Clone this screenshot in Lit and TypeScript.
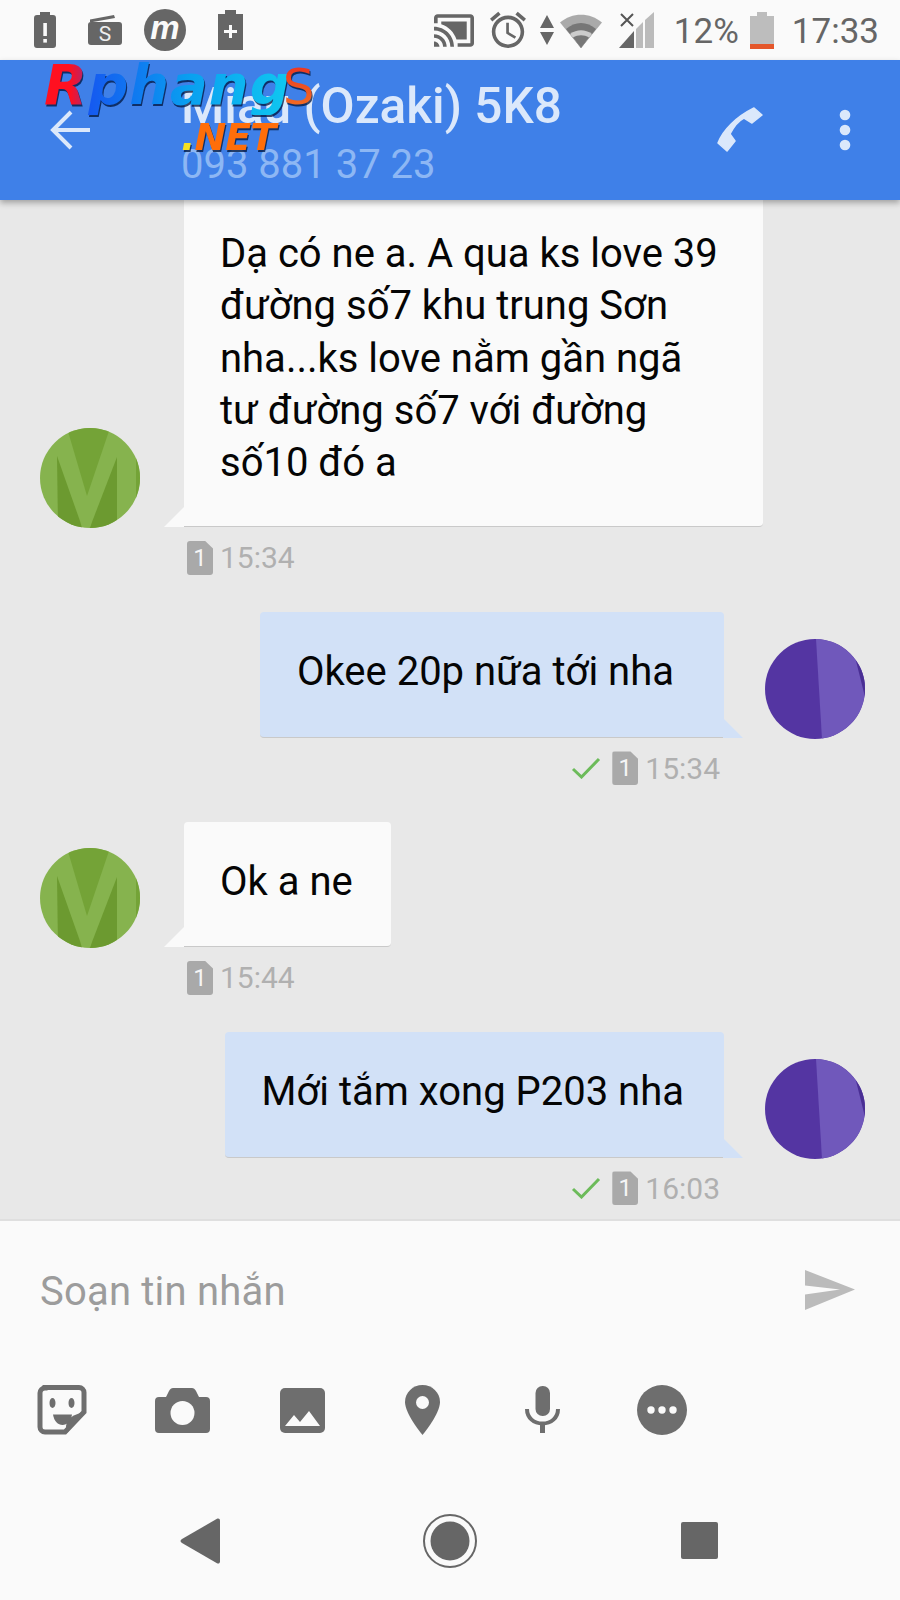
import { LitElement, html, css } from "lit";
import { customElement } from "lit/decorators.js";

const greenAvatar = html`<svg class="avatar" viewBox="0 0 100 100">
  <defs><clipPath id="cg"><circle cx="50" cy="50" r="50"/></clipPath></defs>
  <g clip-path="url(#cg)">
    <rect width="100" height="100" fill="#86b34e"/>
    <polygon points="27,0 70,0 47,68" fill="#74a337"/>
    <polygon points="17,28 40,93 42,100 18,100" fill="#6c9a30"/>
    <polygon points="77,29 77,100 50,100 52,94" fill="#6c9a30"/>
    <rect x="96" y="30" width="4" height="40" fill="#74a337"/>
  </g></svg>`;

const purpleAvatar = html`<svg class="avatar" viewBox="0 0 100 100">
  <defs><clipPath id="cp"><circle cx="50" cy="50" r="50"/></clipPath></defs>
  <g clip-path="url(#cp)">
    <rect width="100" height="100" fill="#5435a2"/>
    <polygon points="51,0 100,0 100,100 57,100" fill="#7058bb"/>
    <polygon points="90,18 100,30 100,58" fill="#4a2f94"/>
  </g></svg>`;

const docIcon = html`<span class="doc"><span>1</span></span>`;
const check = html`<svg class="check" viewBox="0 0 30 22"><path d="M2 12l8.500 8L28 2" fill="none" stroke="#6cbb5a" stroke-width="3"/></svg>`;

@customElement("app-root")
export class AppRoot extends LitElement {
  static styles = css`
    :host { display: block; width: 900px; height: 1600px; position: relative; overflow: hidden; font-family: Roboto, "Noto Sans", sans-serif; background: #fafafa; }
    .page { display: flex; flex-direction: column; height: 1600px; }
    .status { flex: none; height: 60px; display: flex; align-items: center; padding: 0 21px 0 34px; background: #fafafa; color: #666; box-sizing: border-box; }
    .status svg { display: block; flex: none; }
    .st { font-size: 35px; line-height: 40px; padding-top: 3px; }
    .m1 { margin-left: 32px; } .m2 { margin-left: 22px; } .m3 { margin-left: 32px; }
    .cast { margin-left: auto; } .m5 { margin-left: 16px; } .m6 { margin-left: 14px; } .m7 { margin-left: 6px; }
    .m8 { margin-left: 17px; } .m9 { margin-left: 20px; } .m10 { margin-left: 11px; } .m11 { margin-left: 18px; }

    .bar { flex: none; height: 140px; background: #3f80e8; display: flex; align-items: center; box-shadow: 0 3px 6px rgba(0,0,0,.3); position: relative; z-index: 2; box-sizing: border-box; padding-left: 50px; }
    .back { width: 42px; height: 42px; flex: none; }
    .names { margin-left: 89px; padding-top: 7px; display: flex; flex-direction: column; }
    .title { font-size: 49.5px; line-height: 56px; font-weight: 500; color: #dbe8fb; white-space: nowrap; }
    .phone { font-size: 40px; line-height: 48px; margin-top: 7px; color: #8db7f4; white-space: nowrap; }
    .call { width: 46px; height: 46px; margin-left: auto; flex: none; }
    .dots { width: 14px; height: 42px; margin: 0 48px 0 75px; flex: none; }

    .chat { flex: 1; min-height: 0; background: #e8e8e8; overflow: hidden; display: flex; flex-direction: column; }
    .group { margin-bottom: 37px; flex: none; }
    .row { display: flex; align-items: flex-end; }
    .row.in { padding-left: 40px; }
    .row.out { justify-content: flex-end; padding-right: 35px; }
    .avatar { width: 100px; height: 100px; flex: none; display: block; margin-bottom: -1px; }
    .bubble { position: relative; font-size: 40px; line-height: 52.5px; color: #050505; box-sizing: border-box; border-radius: 4px; border-bottom: 1px solid #c9c9c9; padding: 34px 38px 38px 36px; white-space: nowrap; }
    .in .bubble { background: #fafafa; margin-left: 44px; border-bottom-left-radius: 0; }
    .out .bubble { background: #d2e1f7; margin-right: 41px; border-bottom-right-radius: 0; padding-left: 37px; padding-right: 40px; }
    .in .bubble.first { padding-top: 28px; padding-bottom: 37px; width: 579px; white-space: normal; border-top-left-radius: 0; border-top-right-radius: 0; line-height: 52.3px; }
    .out .bubble.wide { padding-right: 50px; }
    .tail { position: absolute; bottom: -1px; width: 20px; height: 20px; }
    .in .tail { left: -20px; }
    .out .tail { right: -19px; }

    .meta { display: flex; align-items: center; height: 35px; font-size: 30px; color: #b0b0b0; }
    .meta.in { margin-top: 13px; padding-left: 187px; }
    .meta.out { margin-top: 13px; margin-bottom: -1px; justify-content: flex-end; padding-right: 180px; }
    .doc { position: relative; width: 26px; height: 34px; background: #a9a9a9; border-radius: 3px; clip-path: polygon(0 0, 70% 0, 100% 22%, 100% 100%, 0 100%); color: #f5f5f5; font-size: 24px; display: flex; align-items: center; justify-content: center; margin-right: 7px; flex: none; }
    .check { width: 30px; height: 22px; margin-right: 11px; }

    .composer { flex: none; height: 381px; background: #fafafa; border-top: 2px solid #dfdfdf; box-sizing: border-box; display: flex; flex-direction: column; }
    .input { flex: none; height: 138px; display: flex; align-items: center; padding: 0 45px 0 40px; }
    .ph { font-size: 40px; color: #9c9c9c; letter-spacing: 0.2px; padding-top: 2px; }
    .send { width: 50px; height: 40px; margin-left: auto; }
    .tools { flex: none; height: 102px; display: flex; align-items: center; padding-left: 2px; }
    .tool { width: 120px; display: flex; justify-content: center; align-items: center; }
    .nav { flex: 1; display: flex; align-items: center; padding-top: 20px; padding-left: 180px; }
    .tri { width: 40px; height: 46px; }
    .home { width: 54px; height: 54px; margin-left: 203px; }
    .sq { width: 37px; height: 37px; margin-left: 204px; background: #666; border-radius: 2px; }

    .logo { position: absolute; left: 44px; top: 55px; z-index: 3; font-family: "DejaVu Sans", sans-serif; font-weight: 700; font-style: italic; pointer-events: none; filter: drop-shadow(1px 2px 0 rgba(0,20,60,.75)); }
    .l1 { display: flex; align-items: baseline; white-space: nowrap; line-height: 60px; font-size: 56px; letter-spacing: 1px; }
    .r { background: linear-gradient(90deg,#ff1020 60%,#a02a80); -webkit-background-clip: text; background-clip: text; color: transparent; }
    .ph2 { background: linear-gradient(90deg,#1558f0,#09a0f0 50%,#10c8f0); -webkit-background-clip: text; background-clip: text; color: transparent; }
    .s { font-size: 50px; font-weight: 400; font-style: normal; margin-left: -8px; background: linear-gradient(180deg,#ea2a20,#f47a24); -webkit-background-clip: text; background-clip: text; color: transparent; }
    .l2 { position: absolute; left: 137px; top: 62px; font-size: 38px; line-height: 40px; color: #ff6e0a; white-space: nowrap; letter-spacing: -1px; }
    .dot { color: #f5e020; }
  `;

  render() {
    return html`<div class="page">
      <div class="status">
        <svg width="22" height="36" viewBox="0 0 22 36"><path d="M6 0h10v3h3a3 3 0 0 1 3 3v27a3 3 0 0 1-3 3H3a3 3 0 0 1-3-3V6a3 3 0 0 1 3-3h3z" fill="#666"/><rect x="9.300" y="11" width="3.600" height="13" fill="#fafafa"/><rect x="9.300" y="27" width="3.600" height="3.600" fill="#fafafa"/></svg>
        <svg class="m1" width="34" height="30" viewBox="0 0 34 30"><path d="M2 4.500L26 0l1 3-25 4.500z" fill="#666"/><rect y="7" width="34" height="23" rx="3" fill="#666"/><text x="17" y="26" font-family="Roboto" font-size="21" fill="#eee" text-anchor="middle">S</text></svg>
        <svg class="m2" width="42" height="42" viewBox="0 0 42 42"><circle cx="21" cy="21" r="21" fill="#666"/><text x="21" y="30" font-family="Liberation Sans" font-size="33" font-weight="700" font-style="italic" fill="#fafafa" text-anchor="middle">m</text></svg>
        <svg class="m3" width="25" height="40" viewBox="0 0 25 40"><path d="M7 0h11v4h7v36H0V4h7z" fill="#666"/><path d="M11 15h3v5h5v3h-5v5h-3v-5H6v-3h5z" fill="#fafafa"/></svg>

        <svg class="cast" width="40" height="33" viewBox="1 3 22 18"><path fill="#666" d="M21 3H3c-1.100 0-2 .9-2 2v3h2V5h18v14h-7v2h7c1.100 0 2-.9 2-2V5c0-1.100-.9-2-2-2zM1 18v3h3c0-1.660-1.340-3-3-3zm0-4v2c2.760 0 5 2.240 5 5h2c0-3.870-3.130-7-7-7zm0-4v2c4.970 0 9 4.030 9 9h2c0-6.080-4.930-11-11-11z"/><path fill="#666" d="M19 7H5v1.630c3.960 1.280 7.090 4.410 8.370 8.370H19V7z"/></svg>
        <svg class="m5" width="36" height="38" viewBox="2 1.800 20 20.400"><path fill="#666" d="M22 5.720l-4.600-3.860-1.290 1.530 4.600 3.860L22 5.720zM7.880 3.390L6.600 1.860 2 5.710l1.290 1.530 4.590-3.850zM12.500 8H11v6l4.750 2.850.75-1.230-4-2.370V8zM12 4c-4.970 0-9 4.030-9 9s4.030 9 9 9c4.970 0 9-4.030 9-9s-4.030-9-9-9zm0 16c-3.870 0-7-3.130-7-7s3.130-7 7-7 7 3.130 7 7-3.130 7-7 7z"/></svg>
        <svg class="m6" width="14" height="30" viewBox="0 0 14 30"><path d="M7 0l7 13H0zM0 17h14L7 30z" fill="#666"/></svg>
        <svg class="m7" width="42" height="35" viewBox="0 0 42 35"><path d="M0 9.500C12-1 30-1 42 9.500L21 35z" fill="#aaa"/><path d="M6 16C15 8 27 8 36 16L21 35z" fill="#777"/><path d="M10 21c7-5 15-5 22 0L21 35z" fill="#ccc"/><path d="M13 24.500c5-3 11-3 16 0L21 35z" fill="#777"/></svg>
        <svg class="m8" width="35" height="36" viewBox="0 0 35 36"><path d="M35 0v36H26V8z" fill="#bbb"/><path d="M24 10v26h-7V17z" fill="#bbb"/><path d="M15 19v17H0z" fill="#666"/><path d="M2 2l12 12M14 2L2 14" stroke="#555" stroke-width="2" fill="none"/></svg>
        <span class="st m9">12%</span>
        <svg class="m10" width="24" height="37" viewBox="0 0 24 37"><path d="M7 0h10v4h7v33H0V4h7z" fill="#bdbdbd"/><rect y="32" width="24" height="5" fill="#e4572b"/></svg>
        <span class="st m11">17:33</span>
      </div>

      <div class="bar">
        <svg class="back" viewBox="0 0 42 42"><path d="M40 21H4M21 3L3 21l18 18" fill="none" stroke="#dbe8fb" stroke-width="4"/></svg>
        <div class="names">
          <div class="title">Miau (Ozaki) 5K8</div>
          <div class="phone">093 881 37 23</div>
        </div>
        <svg class="call" viewBox="0 0 46 46"><path d="M1 36C6 23 19 10 37 1L45 8 35 16 27 11C21 14 16 21 13 27L18 34 10 44z" fill="#dbe8fb" stroke="#dbe8fb" stroke-width="1.500" stroke-linejoin="round"/></svg>
        <svg class="dots" viewBox="0 0 14 42"><circle cx="7" cy="6" r="5.300" fill="#dbe8fb"/><circle cx="7" cy="21" r="5.300" fill="#dbe8fb"/><circle cx="7" cy="36" r="5.300" fill="#dbe8fb"/></svg>
      </div>

      <div class="chat">
        <div class="group">
          <div class="row in">${greenAvatar}
            <div class="bubble first">Dạ có ne a. A qua ks love 39 đường số7 khu trung Sơn nha...ks love nằm gần ngã tư đường số7 với đường số10 đó a
              <svg class="tail" viewBox="0 0 20 20"><path d="M20 0v20H0z" fill="#fafafa"/></svg></div>
          </div>
          <div class="meta in">${docIcon}15:34</div>
        </div>
        <div class="group">
          <div class="row out">
            <div class="bubble wide">Okee 20p nữa tới nha
              <svg class="tail" viewBox="0 0 20 20"><path d="M0 0v20h20z" fill="#d2e1f7"/></svg></div>
            ${purpleAvatar}
          </div>
          <div class="meta out">${check}${docIcon}15:34</div>
        </div>
        <div class="group">
          <div class="row in">${greenAvatar}
            <div class="bubble">Ok a ne
              <svg class="tail" viewBox="0 0 20 20"><path d="M20 0v20H0z" fill="#fafafa"/></svg></div>
          </div>
          <div class="meta in">${docIcon}15:44</div>
        </div>
        <div class="group">
          <div class="row out">
            <div class="bubble">Mới tắm xong P203 nha
              <svg class="tail" viewBox="0 0 20 20"><path d="M0 0v20h20z" fill="#d2e1f7"/></svg></div>
            ${purpleAvatar}
          </div>
          <div class="meta out">${check}${docIcon}16:03</div>
        </div>
      </div>

      <div class="composer">
        <div class="input">
          <span class="ph">Soạn tin nhắn</span>
          <svg class="send" viewBox="0 0 50 40"><path d="M0 0L50 19.500 0 40V24.500L35 19.500 0 15.500z" fill="#bbb"/></svg>
        </div>
        <div class="tools">
          <div class="tool"><svg width="50" height="50" viewBox="0 0 50 50"><path d="M8 2.500H42a5 5 0 0 1 5 5V27L28 47H8a5 5 0 0 1-5-5V8a5 5 0 0 1 5-5z" fill="none" stroke="#6e6e6e" stroke-width="5"/><path d="M48 27L30 48 29 41C30 33 37 29 48 27z" fill="#6e6e6e"/><ellipse cx="15.500" cy="18" rx="3" ry="5" fill="#6e6e6e"/><ellipse cx="34.500" cy="18" rx="3" ry="5" fill="#6e6e6e"/><path d="M16 29.500H35C34 36 30 40 25.500 40S17 36 16 29.500z" fill="#6e6e6e"/></svg></div>
          <div class="tool"><svg width="55" height="45" viewBox="0 0 55 45"><path d="M18 0h19c1.500 0 3 1 4 3l3 6h7a4 4 0 0 1 4 4v28a4 4 0 0 1-4 4H4a4 4 0 0 1-4-4V13a4 4 0 0 1 4-4h7l3-6c1-2 2.500-3 4-3z" fill="#6e6e6e"/><circle cx="27.500" cy="25" r="12" fill="#fafafa"/></svg></div>
          <div class="tool"><svg width="45" height="45" viewBox="0 0 45 45"><rect width="45" height="45" rx="5" fill="#6e6e6e"/><path d="M5 38L14 27l6 7 9-11 11 15z" fill="#fafafa"/></svg></div>
          <div class="tool"><svg width="35" height="50" viewBox="0 0 35 50"><path d="M17.500 0C8 0 0 7.500 0 17 0 29 17.500 50 17.500 50S35 29 35 17C35 7.500 27 0 17.500 0z" fill="#6e6e6e"/><circle cx="17.500" cy="17.500" r="6.500" fill="#fafafa"/></svg></div>
          <div class="tool"><svg width="35" height="48" viewBox="0 0 35 48"><rect x="10.500" width="14.500" height="30" rx="7" fill="#6e6e6e"/><path d="M2 23c0 9 7 14.500 15.500 14.500S33 32 33 23" fill="none" stroke="#6e6e6e" stroke-width="4"/><rect x="15" y="37" width="5" height="10" fill="#6e6e6e"/></svg></div>
          <div class="tool"><svg width="50" height="50" viewBox="0 0 50 50"><circle cx="25" cy="25" r="25" fill="#6e6e6e"/><circle cx="14" cy="25" r="3.700" fill="#fafafa"/><circle cx="25" cy="25" r="3.700" fill="#fafafa"/><circle cx="36" cy="25" r="3.700" fill="#fafafa"/></svg></div>
        </div>
        <div class="nav">
          <svg class="tri" viewBox="0 0 40 46"><path d="M37 .8c1.500-.8 3 0 3 2v40.400c0 2-1.500 2.800-3 2L2 25c-2-1.200-2-2.800 0-4z" fill="#666"/></svg>
          <svg class="home" viewBox="0 0 54 54"><circle cx="27" cy="27" r="26" fill="none" stroke="#666" stroke-width="2"/><circle cx="27" cy="27" r="19.500" fill="#666"/></svg>
          <div class="sq"></div>
        </div>
      </div>

      <div class="logo">
        <div class="l1"><span class="r">R</span><span class="ph2">phang</span><span class="s">S</span></div>
        <div class="l2"><span class="dot">.</span>NET</div>
      </div>
    </div>`;
  }
}
